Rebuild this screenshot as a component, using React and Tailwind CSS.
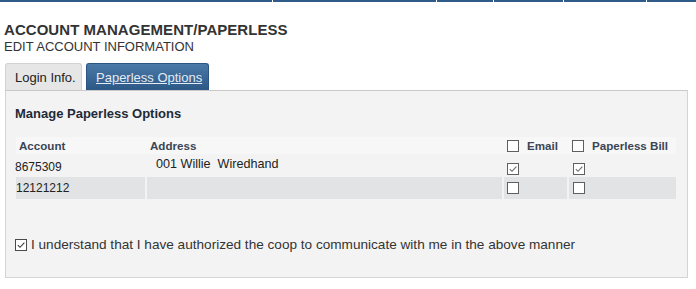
import React from 'react';

function Box({ checked, dark }) {
  return (
    <span
      className={`inline-flex w-[12px] h-[12px] bg-white border ${
        dark ? 'border-[#4a4a4a]' : 'border-[#5f5f5f]'
      }`}
    >
      {checked && (
        <svg viewBox="0 0 10 10" className="w-full h-full">
          <path
            d="M1.8 5.2 L4 7.3 L8.4 2.6"
            fill="none"
            stroke={dark ? '#3a3a3a' : '#6a6a6a'}
            strokeWidth="1.1"
          />
        </svg>
      )}
    </span>
  );
}

const rows = [
  { account: '8675309', address: '001 Willie  Wiredhand', email: true, bill: true },
  { account: '12121212', address: '', email: false, bill: false },
];

export default function App() {
  return (
    <div className="w-[696px] h-[289px] bg-white font-['Liberation_Sans',Arial,sans-serif] text-[#333]">
      {/* nav underline */}
      <div className="flex h-[2px]">
        <div className="w-[272px] bg-[#2f5b88]" />
        <div className="w-[1px]" />
        <div className="w-[163px] bg-[#2f5b88]" />
        <div className="w-[1px]" />
        <div className="w-[56px] bg-[#2f5b88]" />
        <div className="w-[1px]" />
        <div className="w-[69px] bg-[#2f5b88]" />
        <div className="w-[1px]" />
        <div className="w-[82px] bg-[#2f5b88]" />
        <div className="w-[1px]" />
        <div className="flex-1 bg-[#2f5b88]" />
      </div>

      <div className="pl-[4px] mt-[19px]">
        <h1 className="text-[15px] leading-[18px] font-bold text-[#333] tracking-[0.05px]">ACCOUNT MANAGEMENT/PAPERLESS</h1>
        <p className="text-[13px] leading-[15px] text-[#333]">EDIT ACCOUNT INFORMATION</p>
      </div>

      <div className="flex gap-[4px] pl-[5px] mt-[9px] h-[27px]">
        <div className="w-[77px] rounded-t-[3px] border border-b-0 border-[#d2d2d2] bg-[#e6e6e6] text-[13px] leading-[16px] text-[#222] pl-[9px] pt-[6px]">
          Login Info.
        </div>
        <div className="w-[123px] rounded-t-[3px] border border-b-0 border-[#2b5481] bg-gradient-to-b from-[#4b79a8] to-[#2c5886] text-[13px] leading-[16px] text-[#e3ebf4] underline pl-[9px] pt-[6px]">
          Paperless Options
        </div>
      </div>

      <div className="ml-[5px] w-[683px] h-[188px] border border-[#d4d4d4] border-t-[#c9c9c9] bg-[#f3f3f3]">
        <div className="pl-[9px] pt-[15px] text-[13px] leading-[16px] font-bold text-[#1e2a38]">
          Manage Paperless Options
        </div>

        <div className="ml-[10px] mt-[15px] w-[660px] text-[12px]">
          <div className="grid grid-cols-[129px_355px_63px_107px] gap-x-[2px] h-[17px] bg-[#f7f7f7] font-bold text-[11.6px] text-[#3a4554] leading-[17px]">
            <div className="pl-[3px]">Account</div>
            <div className="pl-[3px]">Address</div>
            <div className="flex items-center gap-[8px] pl-[3px]">
              <Box />
              <span>Email</span>
            </div>
            <div className="flex items-center gap-[8px] pl-[3px]">
              <Box />
              <span>Paperless Bill</span>
            </div>
          </div>

          <div className="flex flex-col gap-y-[2px] mt-[1px]">
            {rows.map((r, i) => (
              <div
                key={r.account}
                className="grid grid-cols-[129px_355px_63px_107px] gap-x-[2px] h-[20px] text-[#222]"
              >
                <div className={`leading-[16px] ${i === 0 ? 'pt-[4px] -ml-[1px]' : 'pt-[3px] bg-[#e1e3e4]'}`}>{r.account}</div>
                <div className={`leading-[16px] text-[12.6px] pt-[1px] pl-[9px] whitespace-pre ${i === 1 ? 'bg-[#e1e3e4]' : ''}`}>{r.address}</div>
                <div className={`pl-[3px] ${i === 0 ? 'pt-[6px]' : 'pt-[4px] bg-[#e1e3e4]'}`}>
                  <Box checked={r.email} />
                </div>
                <div className={`pl-[4px] ${i === 0 ? 'pt-[6px]' : 'pt-[4px] bg-[#e1e3e4]'}`}>
                  <Box checked={r.bill} />
                </div>
              </div>
            ))}
          </div>
        </div>

        <div className="flex items-center gap-[4px] ml-[9px] mt-[40px] text-[13.6px] leading-[16px] text-[#333]">
          <Box checked dark />
          <span>I understand that I have authorized the coop to communicate with me in the above manner</span>
        </div>
      </div>
    </div>
  );
}
